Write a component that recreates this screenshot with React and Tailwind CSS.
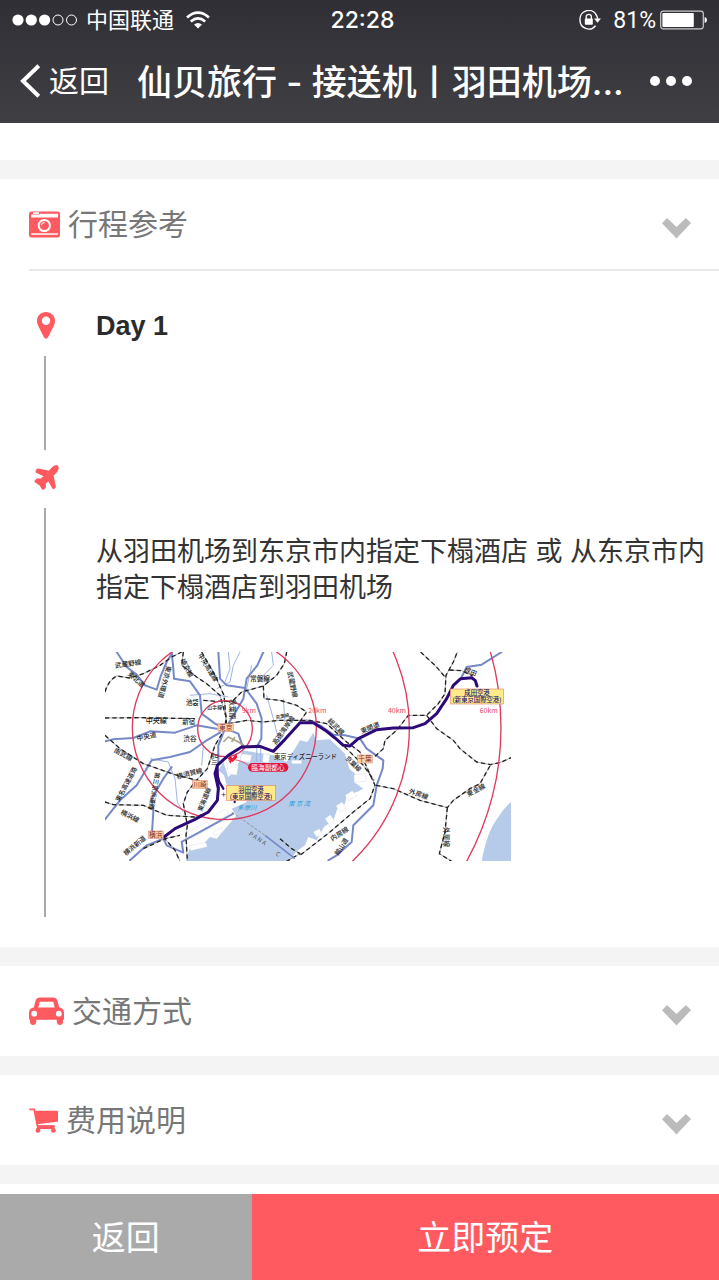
import React from "react";

const CameraIcon = () => (
  <svg aria-hidden="true" viewBox="0 0 31 27" className="h-[27px] w-[31px] shrink-0">
    <rect x="0" y="0.5" width="31" height="26" rx="2.5" fill="#ff5a5f" />
    <path d="M11.5 2.8H29V6.4H2.2V3.4H10.3z" fill="#fff" />
    <rect x="4" y="1.2" width="6" height="1.8" rx="0.6" fill="#fff" />
    <path d="M2.2 22.3H28.8V23.8H2.2z" fill="#fff" />
    <circle cx="15.3" cy="14.5" r="6.6" fill="#fff" />
    <circle cx="15.3" cy="14.5" r="4.6" fill="#ff5a5f" />
    <circle cx="15.3" cy="14.5" r="2.9" fill="none" stroke="#fff" strokeWidth="1" strokeDasharray="5 13" strokeDashoffset="-9" />
  </svg>
);

const CarIcon = () => (
  <svg aria-hidden="true" viewBox="0 0 35 28" className="h-7 w-[35px] shrink-0">
    <path
      fill="#ff5a5f"
      fillRule="evenodd"
      d="M11 0.5H24C26.8 0.5 28 2 28.6 4.3L30.2 10.6C33 10.8 35 12.9 35 15.6V22Q35 22.8 34 22.8V24.5C34 26.6 32.9 28 31 28C29 28 27.8 26.6 27.8 24.5V22.8H7.2V24.5C7.2 26.6 6 28 4 28C2.1 28 1 26.6 1 24.5V22.8Q0 22.8 0 22V15.6C0 12.9 2 10.8 4.8 10.6L6.4 4.3C7 2 8.2 0.5 11 0.5ZM9.3 10.5H25.7L24.4 5.3Q24.2 4.7 23.6 4.7H11.4Q10.8 4.7 10.6 5.3ZM5.2 13.8A2.9 2.9 0 1 0 5.2 19.6A2.9 2.9 0 1 0 5.2 13.8ZM29.8 13.8A2.9 2.9 0 1 0 29.8 19.6A2.9 2.9 0 1 0 29.8 13.8Z"
    />
  </svg>
);

const CartIcon = () => (
  <svg aria-hidden="true" viewBox="0 0 29 25" className="h-[25px] w-[29px] shrink-0">
    <path d="M1 1.3H5.2L8.5 18.2H25" fill="none" stroke="#ff5a5f" strokeWidth="1.8" strokeLinecap="round" strokeLinejoin="round" />
    <path d="M6 2.8H28.2Q29 2.8 29 3.6V12.8Q29 13.6 28.2 13.8L8 16.2z" fill="#ff5a5f" />
    <path d="M7.5 20.8L8.7 17.4H25.5V21.3H8z" fill="#ff5a5f" />
    <circle cx="9" cy="22.4" r="2.4" fill="#ff5a5f" />
    <circle cx="24.4" cy="22.4" r="2.4" fill="#ff5a5f" />
    <path d="M11.5 21.2H22V22.2H11.5z" fill="#fff" />
  </svg>
);

const ChevronDown = () => (
  <svg aria-hidden="true" viewBox="0 0 29 21" className="mt-2 h-[21px] w-[29px] shrink-0">
    <path d="M5 0L14.5 9L24 0L29 5L14.5 20.5L0 5.2z" fill="#bbb" />
  </svg>
);

const PinIcon = () => (
  <svg aria-hidden="true" viewBox="0 0 18 27" className="h-[27px] w-[18px]">
    <path
      fill="#ff5a5f"
      fillRule="evenodd"
      d="M9 0C14 0 18 3.8 18 8.8C18 11 17.4 12.6 16.5 14.4L10.9 25.4Q10.2 26.6 9 26.6Q7.8 26.6 7.1 25.4L1.5 14.4C0.6 12.6 0 11 0 8.8C0 3.8 4 0 9 0ZM9 4.6A4.2 4.2 0 1 0 9 13A4.2 4.2 0 1 0 9 4.6Z"
    />
  </svg>
);

const PlaneIcon = () => (
  <svg aria-hidden="true" viewBox="-2 -2 76 76" className="h-[25px] w-[25px]">
    <path
      fill="#ff5a5f"
      stroke="#ff5a5f"
      strokeWidth="5"
      strokeLinejoin="round"
      d="M69 2C72 5 70 14 65 19L55 30L62 64Q62 66 58 69Q56 69 55 67L42 43L31 54L32 64Q32 66 26 71Q24 71 23 69L17 58L3 49Q1 47 3 46Q7 41 10 41L20 42L30 31L7 20Q4 18 6 15Q8 10 11 11L44 18L53 8C58 2 66 -1 69 2Z"
    />
  </svg>
);

const rails = [
  "M15 140Q25 105 50 92L90 98L130 85L180 60L215 35L245 20",
  "M15 218L120 217L285 220",
  "M15 270L60 310L130 355L225 388L310 410",
  "M15 470L40 478L130 480L200 510L285 515L330 500",
  "M250 20L245 60L290 95L320 115L360 150L378 215L375 250L345 300L322 370L285 410L262 440L250 475L262 540L258 570L262 648",
  "M305 20L345 90L372 150L380 240",
  "M310 165L345 168L385 168L420 175",
  "M385 235L440 225L490 230L540 225L630 225L680 235L740 290L780 320L800 365L825 420L810 460L760 500L690 560L600 630",
  "M400 165L425 140L490 122L530 90L553 55L560 20",
  "M490 122L492 160L540 165L590 180L620 200L600 228",
  "M685 260L745 315L790 360L822 405",
  "M825 333L850 310L855 285L890 255L925 210L980 210L1015 175L1035 145L1038 90L1060 50L1072 20",
  "M962 20L985 42L1005 60L1038 98",
  "M1048 74L1085 76L1118 92",
  "M980 210L1010 250L1060 285L1080 310L1130 350L1172 358L1205 350L1233 337",
  "M828 420L880 430L960 465L1042 487L1060 465L1110 430L1140 415L1172 358",
  "M1042 487L1035 560L1018 625L1055 648",
  "M190 575L225 615L240 648",
  "M130 610L195 580L240 570",
  "M540 580L575 610L600 625L560 648",
];

const roads = [
  "M50 20L80 65L110 88L135 120L170 133L183 90L200 50L215 25",
  "M215 20L220 70L222 100L270 108L300 150L305 205L345 235L375 250",
  "M355 20L360 100L380 120L435 128L470 175L485 220L484 280L470 305",
  "M490 20L472 60L440 100L435 130L430 160L410 195L385 235",
  "M15 288L40 282L100 278L150 258L225 262L290 240L350 250",
  "M15 522L60 465L110 420L155 345L210 335L270 320L320 285L360 262",
  "M155 575L160 500L155 460L190 400L215 365",
  "M375 250L355 300L355 355",
  "M375 250L415 265L430 310",
  "M620 225L660 240L700 268L735 270L780 280L800 310L850 345L848 370L830 420L820 480L760 540L755 590L710 630L685 645",
  "M90 645L140 600L190 580",
  "M190 580L200 600L250 622L245 590L300 560L400 505",
  "M1085 95L1100 65L1145 58L1205 20",
];

const mapLabels = [
  ["武蔵野線", 46, 68, -8, 20],
  ["東北道", 82, 88, 42, 20],
  ["東京外環道", 200, 60, 105, 20],
  ["埼京線", 240, 45, 62, 20],
  ["中央高速線", 293, 30, 58, 19],
  ["常磐線", 450, 108, 0, 20],
  ["武蔵野線", 562, 80, 78, 20],
  ["池袋", 258, 178, 0, 19],
  ["山手線", 322, 190, 0, 15],
  ["秋葉原", 390, 162, 90, 20],
  ["中央線", 137, 233, 0, 21],
  ["新宿", 247, 236, 0, 19],
  ["中央道", 112, 287, -12, 20],
  ["渋谷", 250, 286, 0, 20],
  ["南武線", 40, 320, 28, 20],
  ["品川", 337, 322, 90, 19],
  ["京葉線", 528, 222, -12, 14],
  ["高速湾岸線", 528, 300, -55, 20],
  ["東名高速道路", 58, 470, -62, 19],
  ["第三京浜道路", 166, 380, 100, 19],
  ["横須賀線", 232, 402, -15, 20],
  ["東海道線", 305, 500, -68, 19],
  ["横浜線", 60, 505, 27, 20],
  ["横浜新道", 78, 632, -40, 20],
  ["総武線", 682, 228, 45, 20],
  ["東関道", 785, 265, -22, 20],
  ["京葉線", 735, 340, 45, 19],
  ["外房線", 925, 444, 18, 20],
  ["東金線", 1105, 455, -28, 20],
  ["外房線", 1032, 545, 90, 20],
  ["内房線", 697, 588, -33, 20],
  ["館山道", 715, 632, -58, 19],
  ["成田", 1092, 78, 22, 19],
];

const RouteMap = () => (
  <svg
    role="img"
    aria-label="羽田空港 東京 成田空港"
    viewBox="15 20 1218 628"
    className="block h-auto w-full max-w-[406px] bg-white"
    fontFamily='"Noto Sans CJK JP", sans-serif'
  >
    <path
      fill="#b5cbe9"
      d="M370 350L385 395L400 380L420 345L425 315L520 330L560 350L580 318L600 285L622 290L640 262L648 285L690 282L735 325L748 370L765 385L762 410L790 430L770 440L740 450L735 475L712 490L700 525L672 545L650 585L625 575L615 600L590 618L568 648H258L268 612L300 606L330 575L350 580L410 510L395 490L440 470L440 440L380 420L372 390L355 375Z"
    />
    <path fill="#b5cbe9" d="M1145 648Q1160 560 1195 515Q1215 485 1233 470V648Z" />
    <g fill="#fff" stroke="#c5cfdf" strokeWidth="1">
      <path d="M380 350l35 10-5 30-25-5zM425 325l30 5-5 22-30-5zM490 325l20 3-4 25-18-3zM262 560l60-30 12 16-58 34zM330 520l45-28 14 10-46 32zM575 345l30 0 0 10-30 0z" />
      <path d="M762 388l34-4 3 24-36 3zM735 450l22-14 12 16-22 14zM708 482l18-12 12 18-18 12zM675 520l16-12 12 18-16 12z" />
      <path d="M268 600l50-8 4 12-50 12zM340 560l24-14 6 12-24 14zM640 560l18-10 8 16-16 10z" />
    </g>
    <g fill="none" stroke="#9eb4e4" strokeWidth="3">
      <path d="M385 20L390 70L375 110M420 20L400 60L390 110L350 130M455 60L440 130M480 100L520 60L515 20M500 150L520 220L540 300M550 160L555 230M310 300L305 360M150 340L205 350L225 400L232 470L250 500M470 300V350M482 300V350M270 150L330 145L385 155" />
    </g>
    <g fill="none" stroke="#7688c8" strokeWidth="6" strokeLinejoin="round" strokeLinecap="round">
      {roads.map((d) => (
        <path key={d} d={d} />
      ))}
    </g>
    <g fill="none" stroke="#aaa" strokeWidth="3" strokeLinejoin="round">
      {rails.map((d) => (
        <path key={d} d={d} />
      ))}
    </g>
    <g fill="none" stroke="#222" strokeWidth="4" strokeDasharray="13 9" strokeLinejoin="round">
      {rails.map((d) => (
        <path key={d} d={d} />
      ))}
    </g>
    <path d="M395 500L495 570" fill="none" stroke="#777" strokeWidth="2" strokeDasharray="9 5" />
    <path d="M495 570L585 640" fill="none" stroke="#7688c8" strokeWidth="5" />
    <path d="M370 290L385 275L415 290L432 300M395 290L405 275" fill="none" stroke="#aaa58a" strokeWidth="5" />
    <g fill="none" stroke="#df3a5c" strokeWidth="4">
      <ellipse cx="375" cy="250" rx="82" ry="84" />
      <circle cx="373" cy="247" r="276" />
      <circle cx="373" cy="247" r="555" />
      <circle cx="373" cy="247" r="830" />
    </g>
    <g fill="none" stroke="#2d0a78" strokeLinejoin="round" strokeLinecap="round">
      <path
        strokeWidth="9"
        d="M192 575L225 550L285 522L325 500L352 465L355 430L345 385L352 360L385 330L425 305L480 303L520 318L555 282L600 232L640 232L680 258L705 278L730 300L750 302L775 280L830 253L880 248L940 247L975 235L1010 205L1040 160L1060 120L1082 100L1115 97L1126 106L1131 122"
      />
      <path strokeWidth="7" d="M350 380L358 410L370 430M352 360L355 430" />
    </g>
    <path d="M382 340l8-8 8 6 10-14 4 12-14 14zM385 345l10 2-3 8z" fill="#e51b35" />
    <path d="M395 342Q430 345 446 362" fill="none" stroke="#df3a5c" strokeWidth="2.5" />
    <g fill="#222" fontWeight="500">
      {mapLabels.map(([label, x, y, angle, size]) => (
        <text key={`${label}-${x}`} x={x} y={y} fontSize={size} transform={`rotate(${angle} ${x} ${y})`}>
          {label}
        </text>
      ))}
      <text x="522" y="341" fontSize="19">東京ディズニーランド</text>
    </g>
    <g fill="#e04664" fontSize="21">
      <text x="425" y="203">5km</text>
      <text x="625" y="203">20km</text>
      <text x="864" y="203">40km</text>
      <text x="1139" y="203">60km</text>
    </g>
    <g fill="#fbd0a2" stroke="#d78575" strokeWidth="1.5">
      <rect x="354" y="235" width="46" height="23" />
      <rect x="278" y="405" width="44" height="24" />
      <rect x="145" y="557" width="45" height="23" />
      <rect x="773" y="329" width="44" height="24" />
    </g>
    <g fill="#7c3038" fontSize="20">
      <text x="357" y="254">東京</text>
      <text x="280" y="424">川崎</text>
      <text x="147" y="576">横浜</text>
      <text x="775" y="348">千葉</text>
    </g>
    <rect x="444" y="353" width="121" height="26" rx="13" fill="#e0133c" />
    <text x="454" y="373" fontSize="20" fill="#fff">臨海副都心</text>
    <g fill="#ffeb8a" stroke="#e08b70" strokeWidth="2">
      <rect x="379" y="421" width="148" height="44" />
      <rect x="1051" y="131" width="160" height="45" />
    </g>
    <g fill="#2d1769" fontSize="19" textAnchor="middle" fontWeight="500">
      <text x="453" y="439">羽田空港</text>
      <text x="453" y="460">(東京国際空港)</text>
      <text x="1131" y="150">成田空港</text>
      <text x="1131" y="171">(新東京国際空港)</text>
    </g>
    <g fill="#28a0dc" fontSize="19" fontStyle="italic">
      <text x="412" y="494">多摩川</text>
      <text x="565" y="482">東 京 湾</text>
    </g>
    <path d="M365 448h12M371 442v12" stroke="#333" strokeWidth="2" />
    <circle cx="404" cy="470" r="3.5" fill="#2d0a78" />
    <g fill="#555" fontSize="18">
      <text x="445" y="568" transform="rotate(34 445 568)">P A N A</text>
      <text x="526" y="628" transform="rotate(34 526 628)">C</text>
    </g>
  </svg>
);

const SectionButton = ({ icon, title, expanded }) => (
  <h2>
    <button
      type="button"
      aria-expanded={expanded}
      className="flex h-[90px] w-full items-center pr-7 pl-[29px] text-left text-[#777]"
    >
      {icon}
      <span className="ml-2 flex-1 pt-[2px] text-[30px] leading-10">{title}</span>
      <ChevronDown />
    </button>
  </h2>
);

const StatusBar = () => (
  <div className="grid h-10 grid-cols-[1fr_auto_1fr] items-center px-3 text-[23px] leading-8">
    <div className="flex items-center">
      <svg aria-hidden="true" viewBox="0 0 66 12" className="h-3 w-[66px]">
        <g fill="#fff">
          <circle cx="6" cy="6" r="5.6" />
          <circle cx="19.3" cy="6" r="5.6" />
          <circle cx="32.6" cy="6" r="5.6" />
        </g>
        <g fill="none" stroke="#fff">
          <circle cx="46" cy="6" r="5" />
          <circle cx="59.5" cy="6" r="5" />
        </g>
      </svg>
      <span className="ml-2 pt-[2px] text-[22px]">中国联通</span>
      <svg aria-hidden="true" viewBox="0 0 24 18" className="ml-3 h-[18px] w-6">
        <g fill="none" stroke="#fff" strokeWidth="2.6">
          <path d="M1 6.4Q12 -3.2 23 6.4" />
          <path d="M4.8 10.4Q12 4.2 19.2 10.4" />
        </g>
        <path d="M8 13.6Q12 10.2 16 13.6L12 17.6z" fill="#fff" />
      </svg>
    </div>
    <time className="pl-[6px] font-['Inter',sans-serif] font-medium">22:28</time>
    <div className="flex items-center justify-end">
      <svg aria-hidden="true" viewBox="0 0 22 20" className="h-5 w-[22px]">
        <path d="M17.2 4.5A8.8 8.8 0 0 0 1 10A8.8 8.8 0 0 0 16.6 15.8M16.6 4A8.8 8.8 0 0 1 18.6 9" fill="none" stroke="#fff" strokeWidth="1.4" />
        <path d="M15 8.6H22L18.5 12.8z" fill="#fff" />
        <rect x="5.8" y="8.6" width="8" height="6.2" rx="0.8" fill="#fff" />
        <path d="M7.2 9V6.8Q7.2 4.4 9.8 4.4Q12.4 4.4 12.4 6.8V9" fill="none" stroke="#fff" strokeWidth="1.3" />
      </svg>
      <span className="ml-3 pt-[2px]">81%</span>
      <svg aria-hidden="true" viewBox="0 0 47 20" className="ml-1 h-5 w-[47px]">
        <rect x="0.7" y="1.2" width="42.6" height="17.6" rx="2.5" fill="none" stroke="#ccc" strokeWidth="1.2" />
        <rect x="2.4" y="2.9" width="31.4" height="14.2" rx="1" fill="#fff" />
        <path d="M44.6 7Q47 7.6 47 10T44.6 13z" fill="#fff" />
      </svg>
    </div>
  </div>
);

export default function App() {
  return (
    <div className="flex min-h-screen flex-col bg-white font-['Liberation_Sans','Noto_Sans_CJK_SC',sans-serif]">
      <header className="h-[123px] bg-linear-to-b from-[#302f35] to-[#403f44] font-['Roboto','Noto_Sans_CJK_SC',sans-serif] text-white">
        <StatusBar />
        <div className="flex h-[82px] items-center pr-[27px] pl-5">
          <button type="button" className="flex shrink-0 items-center gap-2 text-[30px] leading-10">
            <svg aria-hidden="true" viewBox="0 0 21 34" className="h-[34px] w-[21px]">
              <path d="M18.8 1.8L3 17L18.8 32.2" fill="none" stroke="#fff" strokeWidth="4" />
            </svg>
            <span className="pt-[2px]">返回</span>
          </button>
          <h1 className="ml-7 min-w-0 flex-1 overflow-hidden pt-[2px] font-['Inter','Noto_Sans_CJK_SC',sans-serif] text-[35px] leading-[48px] font-medium whitespace-nowrap">
            仙贝旅行 - 接送机丨羽田机场...
          </h1>
          <button type="button" aria-label="更多" className="ml-2 shrink-0">
            <svg aria-hidden="true" viewBox="0 0 42 10" className="h-[10px] w-[42px]">
              <g fill="#fff">
                <circle cx="5" cy="5" r="5" />
                <circle cx="21" cy="5" r="5" />
                <circle cx="37" cy="5" r="5" />
              </g>
            </svg>
          </button>
        </div>
      </header>

      <main className="flex-1">
        <section className="mt-[37px] border-t-[19px] border-[#f4f4f4]">
          <SectionButton icon={<CameraIcon />} title="行程参考" expanded />
          <div className="ml-[29px] border-t-2 border-[#e8e8e8]" />
          <ol className="pt-10 pb-[30px]">
            <li className="flex">
              <div className="flex w-24 shrink-0 flex-col items-start">
                <div className="ml-[37px] h-[45px] pt-[1px]">
                  <PinIcon />
                </div>
                <div className="ml-11 h-[94px] w-[2px] bg-[#aaa]" />
              </div>
              <h3 className="pt-[1px] text-[27px] leading-7 font-bold text-[#2b2b2b]">Day 1</h3>
            </li>
            <li className="flex">
              <div className="flex w-24 shrink-0 flex-col items-start">
                <div className="ml-[34px] flex h-[58px] items-center pb-1">
                  <PlaneIcon />
                </div>
                <div className="ml-11 w-[2px] flex-1 bg-[#aaa]" />
              </div>
              <div className="min-w-0 flex-1 pt-[84px] pr-2 pb-14">
                <p className="text-[27px] leading-9 text-[#333]">
                  从羽田机场到东京市内指定下榻酒店 或 从东京市内指定下榻酒店到羽田机场
                </p>
                <div className="mt-[46px] pl-[9px]">
                  <RouteMap />
                </div>
              </div>
            </li>
          </ol>
        </section>
        <section className="border-t-[19px] border-[#f4f4f4]">
          <SectionButton icon={<CarIcon />} title="交通方式" expanded={false} />
        </section>
        <section className="border-y-[19px] border-[#f4f4f4]">
          <SectionButton icon={<CartIcon />} title="费用说明" expanded={false} />
        </section>
      </main>

      <footer className="sticky bottom-0 mt-[9px] flex h-[86px] text-[34px] text-white">
        <button type="button" className="w-[35%] bg-[#aaa] pt-[3px]">返回</button>
        <button type="button" className="flex-1 bg-[#ff5a5f] pt-[3px]">立即预定</button>
      </footer>
    </div>
  );
}
